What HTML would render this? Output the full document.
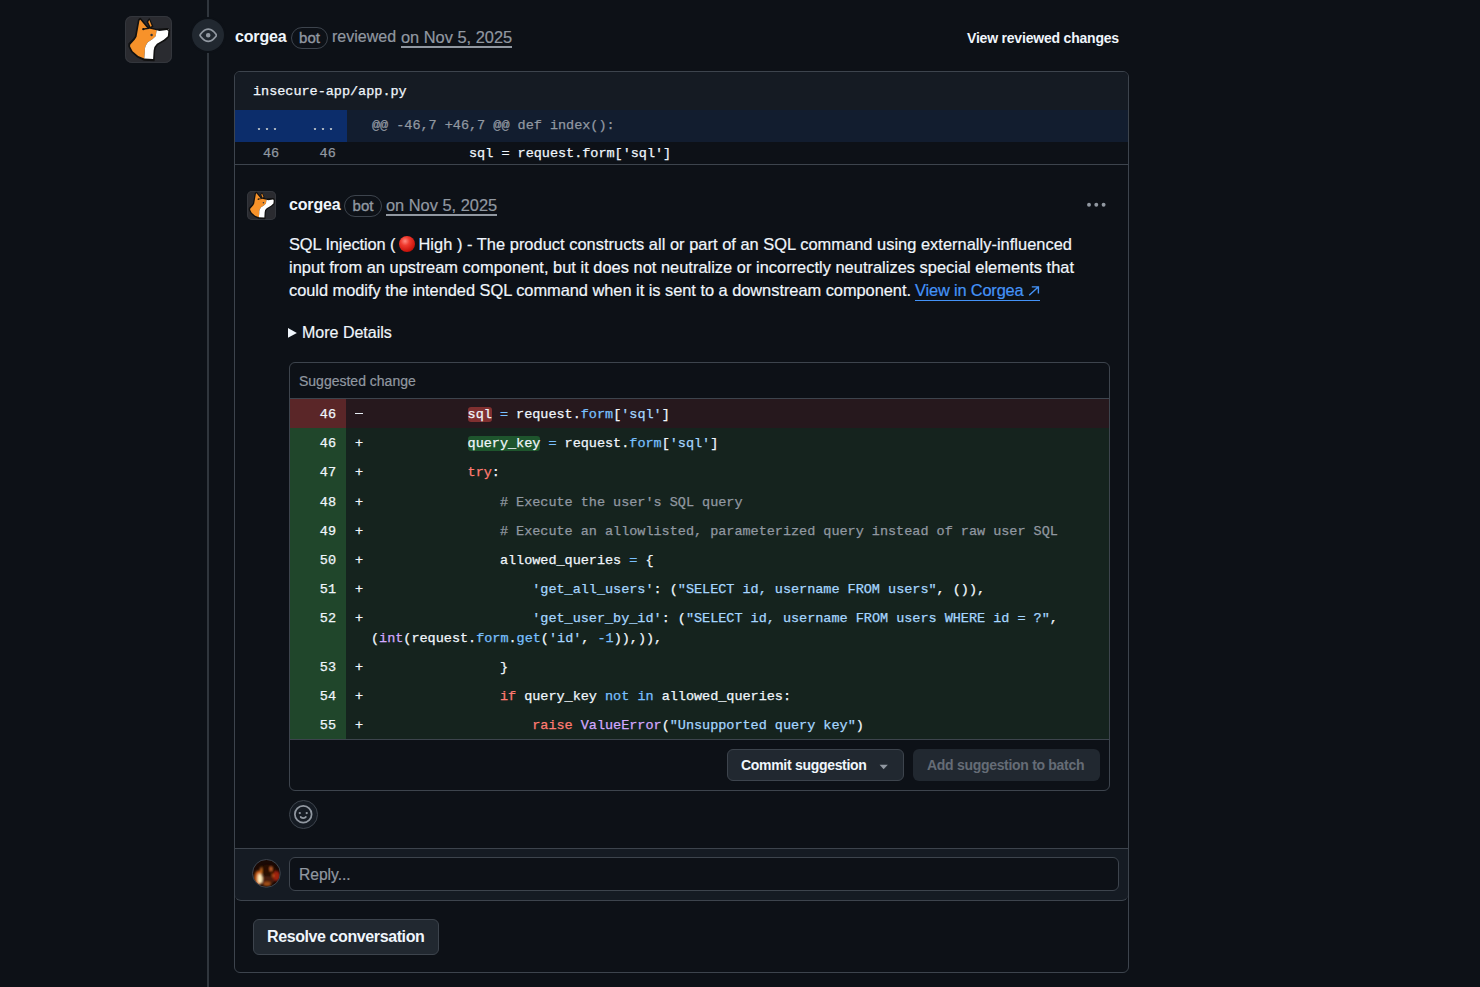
<!DOCTYPE html>
<html><head><meta charset="utf-8">
<style>
*{box-sizing:border-box;margin:0;padding:0}
html,body{width:1480px;height:987px;overflow:hidden;background:#0d1117}
body{font-family:"Liberation Sans",sans-serif;color:#f0f6fc;position:relative}
.a{position:absolute;white-space:pre}
.mono{font-family:"Liberation Mono",monospace}
.tl{left:207px;top:0;width:2px;height:987px;background:#30363d}
.av{left:125px;top:16px;width:47px;height:47px;border-radius:7px;background:#2a2b30;overflow:hidden;box-shadow:inset 0 0 0 1px #33363c}
.eye{left:192px;top:19px;width:32px;height:32px;border-radius:50%;background:#212830;box-shadow:0 0 0 2px #0d1117}
.t16{font-size:16.4px;line-height:20px;-webkit-text-stroke:0.2px currentColor}
.b{font-weight:700;color:#f0f6fc;-webkit-text-stroke:0 !important}
.pill{border:1px solid #3d444d;border-radius:12px;color:#9198a1;font-size:15px;line-height:20px;text-align:center;-webkit-text-stroke:0.35px #9198a1}
.muted{color:#9198a1}
.ul{border-bottom:1.5px solid #9198a1}
.box{left:234px;top:71px;width:895px;height:902px;border:1px solid #3d444d;border-radius:6px;overflow:hidden}
.fh{left:0;top:0;width:893px;height:38px;background:#151b23}
.hunk{left:0;top:38px;width:893px;height:32px;background:#121d2f}
.hnum{left:0;top:0;width:112px;height:32px;background:#0c2d6b}
.ln{left:0;top:70px;width:893px;height:23px;border-bottom:1px solid #3d444d}
.code{font-family:"Liberation Mono",monospace;font-size:13.5px;line-height:20px;white-space:pre;letter-spacing:-0.015px;-webkit-text-stroke:0.25px currentColor}
.sbox{left:289px;top:362px;width:821px;height:429px;border:1px solid #3d444d;border-radius:6px;overflow:hidden}
.shdr{left:0;top:0;width:819px;height:36px;border-bottom:1px solid #3d444d}
.row{position:absolute;left:0;width:819px;height:29.3px}
.num{position:absolute;left:0;top:0;width:56px;height:100%;text-align:right;padding-right:10px;color:#f0f6fc}
.del{background:#26181d}.del .num{background:#5a2628}
.add{background:#15231e}.add .num{background:#20462b}
.mk{position:absolute;left:65px;top:0}
.tx{position:absolute;left:80.5px;top:0}
.k{color:#ff7b72}.s{color:#a5d6ff}.c{color:#79c0ff}.f{color:#d2a8ff}.cm{color:#9198a1}
.hl-d{background:#803030;border-radius:3px}
.hl-a{background:#1e552d;border-radius:3px}
.btn{border:1px solid #3d444d;background:#212830;border-radius:6px}
.reply{left:0;top:776px;width:893px;height:53px;background:#151b23;border-top:1px solid #3d444d;border-bottom:1px solid #3d444d;border-radius:0 0 6px 6px}
</style></head><body>
<div class="a tl"></div>
<div class="a av">
<svg width="47" height="47" viewBox="19.74 19.74 927.8 927.8" style="position:absolute;left:0;top:0">
<path d="M320 70 L450 225 L480 250 L640 285 L860 270 L895 300 L885 420 L800 500 L660 580 L615 640 L600 700 L590 900 L400 890 L260 820 L150 720 L100 620 L100 570 L200 470 L230 420 L290 100 Z" fill="#111" stroke="#111" stroke-width="30" stroke-linejoin="round"/>
<path d="M455 135 L500 75 L570 225 L515 255 Z" fill="#111" stroke="#111" stroke-width="20" stroke-linejoin="round"/>
<path d="M478 140 L500 100 L548 215 L522 232 Z" fill="#f7922a"/>
<path d="M322 95 L440 235 L470 262 L645 300 L625 420 L560 480 L470 540 L430 600 L412 660 L412 720 L400 860 L280 810 L170 715 L120 620 L122 585 L215 485 L248 430 L305 110 Z" fill="#f7922a"/>
<path d="M645 300 L700 315 L850 295 L875 320 L865 420 L785 490 L650 570 L600 630 L585 700 L575 870 L400 860 L412 720 L412 660 L430 600 L470 540 L560 480 L625 420 Z" fill="#fff"/>
<path d="M380 280 L490 262" stroke="#111" stroke-width="26" stroke-linecap="round"/>
<circle cx="382" cy="280" r="22" fill="#111"/>
<circle cx="545" cy="395" r="24" fill="#2b3440"/>
<circle cx="880" cy="290" r="13" fill="#666"/>
</svg>
</div>
<div class="a eye"><svg width="18.5" height="18.5" viewBox="0 0 16 16" style="position:absolute;left:6.75px;top:6.75px" fill="#9198a1"><path d="M8 2c1.981 0 3.671.992 4.933 2.078 1.27 1.091 2.187 2.345 2.637 3.023a1.62 1.62 0 0 1 0 1.798c-.45.678-1.367 1.932-2.637 3.023C11.67 13.008 9.981 14 8 14c-1.981 0-3.671-.992-4.933-2.078C1.797 10.83.88 9.576.43 8.898a1.62 1.62 0 0 1 0-1.798c.45-.677 1.367-1.931 2.637-3.022C4.33 2.992 6.019 2 8 2ZM1.679 7.932a.12.12 0 0 0 0 .136c.411.622 1.241 1.75 2.366 2.717C5.176 11.758 6.527 12.5 8 12.5c1.473 0 2.825-.742 3.955-1.715 1.124-.967 1.954-2.096 2.366-2.717a.12.12 0 0 0 0-.136c-.412-.621-1.242-1.75-2.366-2.717C10.824 4.242 9.473 3.5 8 3.5c-1.473 0-2.825.742-3.955 1.715-1.124.967-1.954 2.096-2.366 2.717ZM8 10a2 2 0 1 1-.001-3.999A2 2 0 0 1 8 10Z"/></svg></div>

<div class="a t16 b" style="left:235px;top:27px;font-size:16px;letter-spacing:-0.15px">corgea</div>
<div class="a pill" style="left:291px;top:27px;width:37px;height:22px">bot</div>
<div class="a t16 muted" style="left:332px;top:27px;font-size:16px">reviewed</div>
<div class="a t16 muted" style="left:401px;top:27px">on Nov 5, 2025</div>
<div class="a" style="left:401px;top:46px;width:111px;height:1.5px;background:#9198a1"></div>
<div class="a b" style="left:967px;top:29px;font-size:14px;line-height:18px;letter-spacing:-0.2px">View reviewed changes</div>

<div class="a box">
  <div class="a fh"><div class="a code" style="left:18px;top:10px">insecure-app/app.py</div></div>
  <div class="a hunk">
    <div class="a hnum"></div>
    <div class="a" style="left:22.9px;top:17.7px;width:2.4px;height:2.4px;background:#b4bcc4;border-radius:0.4px"></div><div class="a" style="left:31.0px;top:17.7px;width:2.4px;height:2.4px;background:#b4bcc4;border-radius:0.4px"></div><div class="a" style="left:39.1px;top:17.7px;width:2.4px;height:2.4px;background:#b4bcc4;border-radius:0.4px"></div><div class="a" style="left:78.8px;top:17.7px;width:2.4px;height:2.4px;background:#b4bcc4;border-radius:0.4px"></div><div class="a" style="left:86.8px;top:17.7px;width:2.4px;height:2.4px;background:#b4bcc4;border-radius:0.4px"></div><div class="a" style="left:94.9px;top:17.7px;width:2.4px;height:2.4px;background:#b4bcc4;border-radius:0.4px"></div>
    <div class="a code" style="left:137px;top:6px;color:#9198a1">@@ -46,7 +46,7 @@ def index():</div>
  </div>
  <div class="a ln">
    <div class="a code" style="left:28px;top:2px;color:#9198a1">46     46</div>
    <div class="a code" style="left:137px;top:2px">            sql = request.form['sql']</div>
  </div>
  <div class="a reply"></div>
  <div class="a btn" style="left:18px;top:847px;width:186px;height:36px"></div>
  <div class="a b" style="left:32px;top:856px;font-size:16px;line-height:18px;letter-spacing:-0.4px">Resolve conversation</div>
</div>

<!-- comment -->
<div class="a" style="left:247px;top:191px;width:29px;height:29px;border-radius:5px;background:#2a2b30;overflow:hidden;box-shadow:inset 0 0 0 1px #33363c">
<svg width="29" height="29" viewBox="19.74 19.74 927.8 927.8" style="position:absolute;left:0;top:0">
<path d="M320 70 L450 225 L480 250 L640 285 L860 270 L895 300 L885 420 L800 500 L660 580 L615 640 L600 700 L590 900 L400 890 L260 820 L150 720 L100 620 L100 570 L200 470 L230 420 L290 100 Z" fill="#111" stroke="#111" stroke-width="45" stroke-linejoin="round"/>
<path d="M455 135 L500 75 L570 225 L515 255 Z" fill="#111" stroke="#111" stroke-width="20" stroke-linejoin="round"/>
<path d="M478 140 L500 100 L548 215 L522 232 Z" fill="#f7922a"/>
<path d="M322 95 L440 235 L470 262 L645 300 L625 420 L560 480 L470 540 L430 600 L412 660 L412 720 L400 860 L280 810 L170 715 L120 620 L122 585 L215 485 L248 430 L305 110 Z" fill="#f7922a"/>
<path d="M645 300 L700 315 L850 295 L875 320 L865 420 L785 490 L650 570 L600 630 L585 700 L575 870 L400 860 L412 720 L412 660 L430 600 L470 540 L560 480 L625 420 Z" fill="#fff"/>
<path d="M380 280 L490 262" stroke="#111" stroke-width="26" stroke-linecap="round"/>
<circle cx="382" cy="280" r="22" fill="#111"/>
<circle cx="545" cy="395" r="24" fill="#2b3440"/>
<circle cx="880" cy="290" r="13" fill="#666"/>
</svg>
</div>
<div class="a t16 b" style="left:289px;top:195px;font-size:16px;letter-spacing:-0.15px">corgea</div>
<div class="a pill" style="left:344px;top:195px;width:38px;height:22px">bot</div>
<div class="a t16 muted" style="left:386px;top:195px">on Nov 5, 2025</div>
<div class="a" style="left:386px;top:214px;width:111px;height:1.5px;background:#9198a1"></div>
<svg class="a" style="left:1080px;top:195px" width="30" height="20" viewBox="1080 195 30 20" fill="#9198a1"><circle cx="1089" cy="204.8" r="1.95"/><circle cx="1096.3" cy="204.8" r="1.95"/><circle cx="1103.6" cy="204.8" r="1.95"/></svg>

<div class="a t16" style="left:289px;top:234px;letter-spacing:-0.09px">SQL Injection (</div>
<div class="a" style="left:399px;top:236px;width:16px;height:16px;border-radius:50%;background:radial-gradient(circle at 38% 32%,#ff8a80 0,#f03a2e 30%,#c8140c 70%,#8f0a05 100%)"></div>
<div class="a t16" style="left:418.5px;top:234px;letter-spacing:0.034px">High ) - The product constructs all or part of an SQL command using externally-influenced</div>
<div class="a t16" style="left:289px;top:257px;letter-spacing:0.022px">input from an upstream component, but it does not neutralize or incorrectly neutralizes special elements that</div>
<div class="a t16" style="left:289px;top:280px;letter-spacing:-0.03px">could modify the intended SQL command when it is sent to a downstream component.</div>
<div class="a t16" style="left:915px;top:280px;letter-spacing:-0.17px;color:#4493f8">View in Corgea</div>
<svg class="a" style="left:1028px;top:286px" width="12" height="10" viewBox="0 0 12 10"><path d="M1.2 9.2 L10.2 1 M3.8 0.9 H10.4 V7.4" fill="none" stroke="#4493f8" stroke-width="1.4"/></svg>
<div class="a" style="left:915px;top:299.5px;width:125px;height:1px;background:#4493f8"></div>

<svg class="a" style="left:288.3px;top:328.3px" width="10" height="10" viewBox="0 0 10 10"><path d="M0 0 L8.9 4.9 L0 9.8 Z" fill="#f0f6fc"/></svg>
<div class="a t16" style="left:302px;top:323px;font-size:16px">More Details</div>

<div class="a sbox">
  <div class="a shdr"><div class="a muted" style="left:9px;top:9px;font-size:14px;line-height:18px;-webkit-text-stroke:0.2px #9198a1">Suggested change</div></div>
  <div class="row del" style="top:36px"><div class="num code" style="padding-top:6.3px">46</div><div class="mk" style="left:65px;top:14.2px;width:8px;height:1.3px;background:#e6edf3"></div><div class="tx code" style="top:6.3px">            <span class="hl-d">sql</span> <span class="c">=</span> request.<span class="c">form</span>[<span class="s">'sql'</span>]</div></div>
  <div class="row add" style="top:65.1px"><div class="num code" style="padding-top:6.3px">46</div><div class="mk code" style="top:6.3px">+</div><div class="tx code" style="top:6.3px">            <span class="hl-a">query_key</span> <span class="c">=</span> request.<span class="c">form</span>[<span class="s">'sql'</span>]</div></div>
  <div class="row add" style="top:94.2px"><div class="num code" style="padding-top:6.3px">47</div><div class="mk code" style="top:6.3px">+</div><div class="tx code" style="top:6.3px">            <span class="k">try</span>:</div></div>
  <div class="row add" style="top:123.3px"><div class="num code" style="padding-top:6.3px">48</div><div class="mk code" style="top:6.3px">+</div><div class="tx code" style="top:6.3px">                <span class="cm"># Execute the user's SQL query</span></div></div>
  <div class="row add" style="top:152.4px"><div class="num code" style="padding-top:6.3px">49</div><div class="mk code" style="top:6.3px">+</div><div class="tx code" style="top:6.3px">                <span class="cm"># Execute an allowlisted, parameterized query instead of raw user SQL</span></div></div>
  <div class="row add" style="top:181.5px"><div class="num code" style="padding-top:6.3px">50</div><div class="mk code" style="top:6.3px">+</div><div class="tx code" style="top:6.3px">                allowed_queries <span class="c">=</span> {</div></div>
  <div class="row add" style="top:210.6px"><div class="num code" style="padding-top:6.3px">51</div><div class="mk code" style="top:6.3px">+</div><div class="tx code" style="top:6.3px">                    <span class="s">'get_all_users'</span>: (<span class="s">"SELECT id, username FROM users"</span>, ()),</div></div>
  <div class="row add" style="top:239.7px;height:49.2px"><div class="num code" style="padding-top:6.3px">52</div><div class="mk code" style="top:6.3px">+</div><div class="tx code" style="top:6.3px">                    <span class="s">'get_user_by_id'</span>: (<span class="s">"SELECT id, username FROM users WHERE id = ?"</span>,</div><div class="tx code" style="top:26.3px;left:81px">(<span class="f">int</span>(request.<span class="c">form</span>.<span class="c">get</span>(<span class="s">'id'</span>, <span class="c">-1</span>)),)),</div></div>
  <div class="row add" style="top:288.9px"><div class="num code" style="padding-top:6.3px">53</div><div class="mk code" style="top:6.3px">+</div><div class="tx code" style="top:6.3px">                }</div></div>
  <div class="row add" style="top:318px"><div class="num code" style="padding-top:6.3px">54</div><div class="mk code" style="top:6.3px">+</div><div class="tx code" style="top:6.3px">                <span class="k">if</span> query_key <span class="c">not</span> <span class="c">in</span> allowed_queries:</div></div>
  <div class="row add" style="top:347.1px;border-bottom:1px solid #3d444d;height:30.1px"><div class="num code" style="padding-top:6.3px">55</div><div class="mk code" style="top:6.3px">+</div><div class="tx code" style="top:6.3px">                    <span class="k">raise</span> <span class="f">ValueError</span>(<span class="s">"Unsupported query key"</span>)</div></div>
  <div class="a btn" style="left:437px;top:386px;width:177px;height:32px"></div>
  <div class="a b" style="left:451px;top:394px;font-size:14px;line-height:16px;letter-spacing:-0.3px">Commit suggestion</div>
  <svg class="a" style="left:589px;top:401px" width="10" height="6" viewBox="0 0 10 6"><path d="M0.6 0.8 L4.6 5.2 L8.8 0.8 Z" fill="#9198a1"/></svg>
  <div class="a" style="left:623px;top:386px;width:187px;height:32px;background:#212830;border-radius:6px"></div>
  <div class="a" style="left:637px;top:394px;font-size:14px;line-height:16px;letter-spacing:-0.3px;font-weight:700;color:#656c76">Add suggestion to batch</div>
</div>

<div class="a" style="left:289px;top:800px;width:29px;height:29px;border-radius:50%;border:1px solid #3d444d;background:#151b23"></div>
<svg class="a" style="left:294.2px;top:805.2px" width="18.5" height="18.5" viewBox="0 0 16 16" fill="#9198a1"><path d="M8 0a8 8 0 1 1 0 16A8 8 0 0 1 8 0ZM1.5 8a6.5 6.5 0 1 0 13 0 6.5 6.5 0 0 0-13 0Zm3.82 1.636a.75.75 0 0 1 1.038.175l.007.009c.103.118.22.222.35.31.264.178.683.37 1.285.37.602 0 1.02-.192 1.285-.371.13-.088.247-.192.35-.31l.007-.008a.75.75 0 0 1 1.222.87l-.022-.015c.02.013.021.015.021.015v.001l-.001.002-.002.003-.005.007-.014.019a2.066 2.066 0 0 1-.184.213c-.16.166-.338.316-.53.445-.63.418-1.37.638-2.127.629-.946 0-1.652-.308-2.126-.63a3.331 3.331 0 0 1-.715-.657l-.014-.02-.005-.006-.002-.003v-.002h-.001l.613-.432-.614.43a.75.75 0 0 1 .183-1.044ZM12 7a1 1 0 1 1-2 0 1 1 0 0 1 2 0ZM5 8a1 1 0 1 1 0-2 1 1 0 0 1 0 2Z"/></svg>

<svg class="a" style="left:252px;top:859px" width="29" height="29" viewBox="0 0 29 29">
<defs><filter id="bl" x="-30%" y="-30%" width="160%" height="160%"><feGaussianBlur stdDeviation="0.9"/></filter><clipPath id="cc"><circle cx="14.4" cy="14.4" r="13.6"/></clipPath></defs>
<g clip-path="url(#cc)">
<rect width="29" height="29" fill="#1a0904"/>
<g filter="url(#bl)">
<ellipse cx="16" cy="11" rx="8" ry="5" fill="#2a1006"/>
<ellipse cx="15" cy="21" rx="8" ry="4" fill="#4a1e0a"/>
<ellipse cx="6.5" cy="19" rx="4.2" ry="7.5" fill="#c85e14"/>
<ellipse cx="8" cy="19.5" rx="2.4" ry="5" fill="#fff0c0"/>
<ellipse cx="9" cy="12" rx="1" ry="4" fill="#d07020"/>
<ellipse cx="15" cy="25" rx="4" ry="2.2" fill="#a04e18"/>
<ellipse cx="24.5" cy="17" rx="3.5" ry="5" fill="#a02410"/>
<ellipse cx="19" cy="10" rx="1.2" ry="2.4" fill="#d86c30"/>
<ellipse cx="21" cy="16.5" rx="1.3" ry="1.3" fill="#d86020"/>
</g></g>
<circle cx="14.4" cy="14.4" r="13.9" fill="none" stroke="#3d444d" stroke-width="1"/>
</svg>
<div class="a" style="left:289px;top:857px;width:830px;height:34px;border:1px solid #3d444d;border-radius:6px;background:#0d1117"></div>
<div class="a muted" style="left:299px;top:866px;font-size:15.6px;line-height:18px;-webkit-text-stroke:0.2px #9198a1">Reply...</div>
</body></html>
